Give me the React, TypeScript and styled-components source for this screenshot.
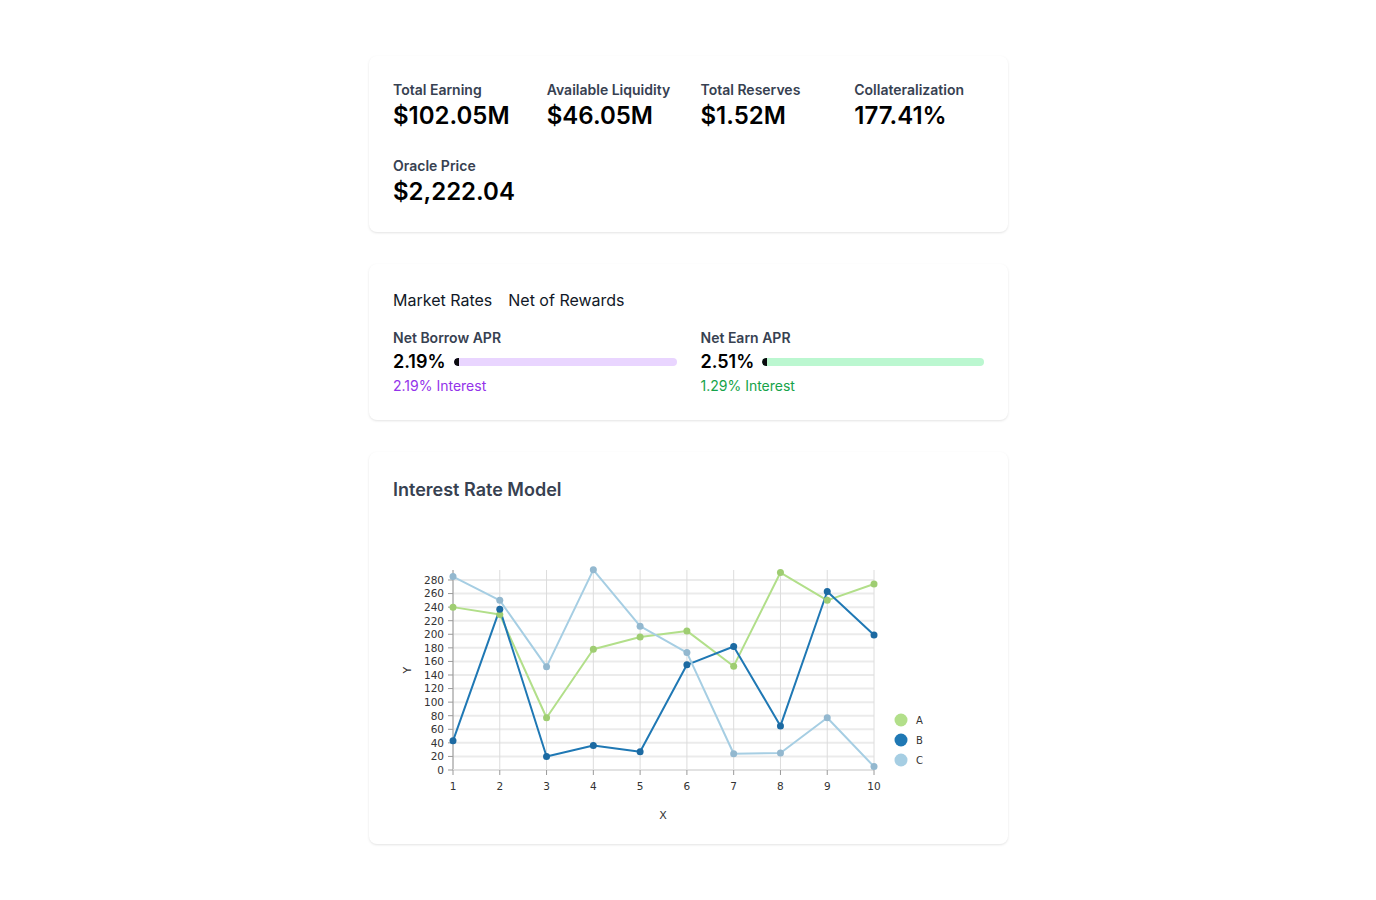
import React from "react";
import styled, { createGlobalStyle } from "styled-components";

const GlobalStyle = createGlobalStyle`
  html, body { margin: 0; padding: 0; background: #ffffff; }
  body { font-family: Inter, "Noto Sans", sans-serif; color: #111827; }
  * { box-sizing: border-box; }
`;

const Page = styled.div`
  display: flex;
  flex-direction: column;
  align-items: center;
  gap: 32px;
  padding: 56px 0 56px 1px;
`;

const Card = styled.section<{ $padBottom?: number }>`
  width: 639px;
  background: #fff;
  border-radius: 8px;
  box-shadow: 0 1px 3px rgba(0, 0, 0, 0.08), 0 1px 2px rgba(0, 0, 0, 0.04);
  padding: 24px 24px ${(p) => p.$padBottom ?? 24}px;
`;

const StatsGrid = styled.div`
  display: grid;
  grid-template-columns: repeat(4, 1fr);
  column-gap: 24px;
  row-gap: 24px;
`;

const Stat = styled.div`
  display: flex;
  flex-direction: column;
`;

const Label = styled.div`
  font-size: 14px;
  line-height: 20px;
  font-weight: 600;
  color: #374151;
  white-space: nowrap;
`;

const BigValue = styled.div`
  font-size: 24px;
  line-height: 32px;
  font-weight: 600;
  color: #000;
`;

const Tabs = styled.div`
  display: flex;
  gap: 16px;
  font-size: 16px;
  line-height: 24px;
  color: #111827;
  margin-bottom: 16px;
`;

const RatesGrid = styled.div`
  display: grid;
  grid-template-columns: 1fr 1fr;
  column-gap: 24px;
`;

const RateRow = styled.div`
  display: flex;
  align-items: center;
  gap: 8px;
  height: 28px;
`;

const RateValue = styled.div`
  font-size: 18px;
  line-height: 28px;
  font-weight: 600;
  color: #000;
`;

const Track = styled.div<{ $bg: string }>`
  flex: 1;
  height: 8px;
  border-radius: 9999px;
  background: ${(p) => p.$bg};
  overflow: hidden;
  display: flex;
`;

const Fill = styled.div`
  width: 5px;
  height: 100%;
  background: #0b0b0f;
  border-radius: 9999px 0 0 9999px;
`;

const Interest = styled.div<{ $color: string }>`
  font-size: 14px;
  line-height: 20px;
  color: ${(p) => p.$color};
`;

const ChartTitle = styled.h2`
  margin: 0;
  font-size: 18px;
  line-height: 28px;
  font-weight: 600;
  color: #374151;
`;

const ChartSvg = styled.svg`
  display: block;
  font-family: "DejaVu Sans", sans-serif;
`;

const series = [
  {
    name: "A",
    line: "#b2df8a",
    point: "#9fcd72",
    values: [240, 229, 77, 178, 196, 205, 153, 291, 250, 274],
  },
  {
    name: "B",
    line: "#1f78b4",
    point: "#1c6aa2",
    values: [43, 237, 20, 36, 27, 155, 182, 65, 263, 199],
  },
  {
    name: "C",
    line: "#a6cee3",
    point: "#93b8cf",
    values: [285, 250, 152, 295, 212, 173, 24, 25, 77, 5],
  },
];

const sx = (i: number) => 60 + i * 46.78;
const sy = (v: number) => 266 - v * 0.6786;

function Chart() {
  const yTicks = Array.from({ length: 15 }, (_, k) => k * 20);
  const xTicks = Array.from({ length: 10 }, (_, k) => k);
  return (
    <ChartSvg width={591} height={320} viewBox="0 0 591 320">
      {yTicks.map((t) => (
        <line key={"hg" + t} x1={60} x2={481} y1={sy(t)} y2={sy(t)} stroke="#ebebeb" strokeWidth={2} />
      ))}
      {xTicks.map((i) => (
        <line key={"vg" + i} x1={sx(i)} x2={sx(i)} y1={66} y2={266} stroke="#dcdcdc" strokeWidth={1} />
      ))}
      <line x1={60} x2={60} y1={66} y2={266} stroke="#9a9a9a" strokeWidth={1} />
      <line x1={60} x2={481} y1={266} y2={266} stroke="#e2e2e2" strokeWidth={2} />
      {yTicks.map((t) => (
        <g key={"yt" + t}>
          <line x1={55} x2={60} y1={sy(t)} y2={sy(t)} stroke="#9a9a9a" />
          <text x={51} y={sy(t) + 3.8} fontSize={10.5} fill="#333" textAnchor="end">
            {t}
          </text>
        </g>
      ))}
      {xTicks.map((i) => (
        <g key={"xt" + i}>
          <line x1={sx(i)} x2={sx(i)} y1={266} y2={271} stroke="#9a9a9a" />
          <text x={sx(i)} y={285.5} fontSize={10.5} fill="#333" textAnchor="middle">
            {i + 1}
          </text>
        </g>
      ))}
      <text x={18} y={166} fontSize={11} fill="#333" textAnchor="middle" transform="rotate(-90 18 166)">
        Y
      </text>
      <text x={270} y={315} fontSize={11} fill="#333" textAnchor="middle">
        X
      </text>
      {series.map((s) => (
        <polyline
          key={"l" + s.name}
          points={s.values.map((v, i) => `${sx(i)},${sy(v)}`).join(" ")}
          fill="none"
          stroke={s.line}
          strokeWidth={2}
          strokeLinejoin="round"
        />
      ))}
      {series.map((s) =>
        s.values.map((v, i) => (
          <circle key={s.name + i} cx={sx(i)} cy={sy(v)} r={3.5} fill={s.point} />
        ))
      )}
      {series.map((s, k) => (
        <g key={"lg" + s.name}>
          <circle cx={508} cy={216 + k * 20} r={6.5} fill={s.line} />
          <text x={523} y={220 + k * 20} fontSize={10} fill="#333">
            {s.name}
          </text>
        </g>
      ))}
    </ChartSvg>
  );
}

const stats = [
  { label: "Total Earning", value: "$102.05M" },
  { label: "Available Liquidity", value: "$46.05M" },
  { label: "Total Reserves", value: "$1.52M" },
  { label: "Collateralization", value: "177.41%" },
  { label: "Oracle Price", value: "$2,222.04" },
];

const rates = [
  { label: "Net Borrow APR", value: "2.19%", track: "#e9d5ff", interest: "2.19% Interest", color: "#9333ea" },
  { label: "Net Earn APR", value: "2.51%", track: "#bbf7d0", interest: "1.29% Interest", color: "#16a34a" },
];

export default function App() {
  return (
    <>
      <GlobalStyle />
      <Page>
        <Card>
          <StatsGrid>
            {stats.map((s) => (
              <Stat key={s.label}>
                <Label>{s.label}</Label>
                <BigValue>{s.value}</BigValue>
              </Stat>
            ))}
          </StatsGrid>
        </Card>
        <Card>
          <Tabs>
            <span>Market Rates</span>
            <span>Net of Rewards</span>
          </Tabs>
          <RatesGrid>
            {rates.map((r) => (
              <Stat key={r.label}>
                <Label>{r.label}</Label>
                <RateRow>
                  <RateValue>{r.value}</RateValue>
                  <Track $bg={r.track}>
                    <Fill />
                  </Track>
                </RateRow>
                <Interest $color={r.color}>{r.interest}</Interest>
              </Stat>
            ))}
          </RatesGrid>
        </Card>
        <Card $padBottom={20}>
          <ChartTitle>Interest Rate Model</ChartTitle>
          <Chart />
        </Card>
      </Page>
    </>
  );
}
